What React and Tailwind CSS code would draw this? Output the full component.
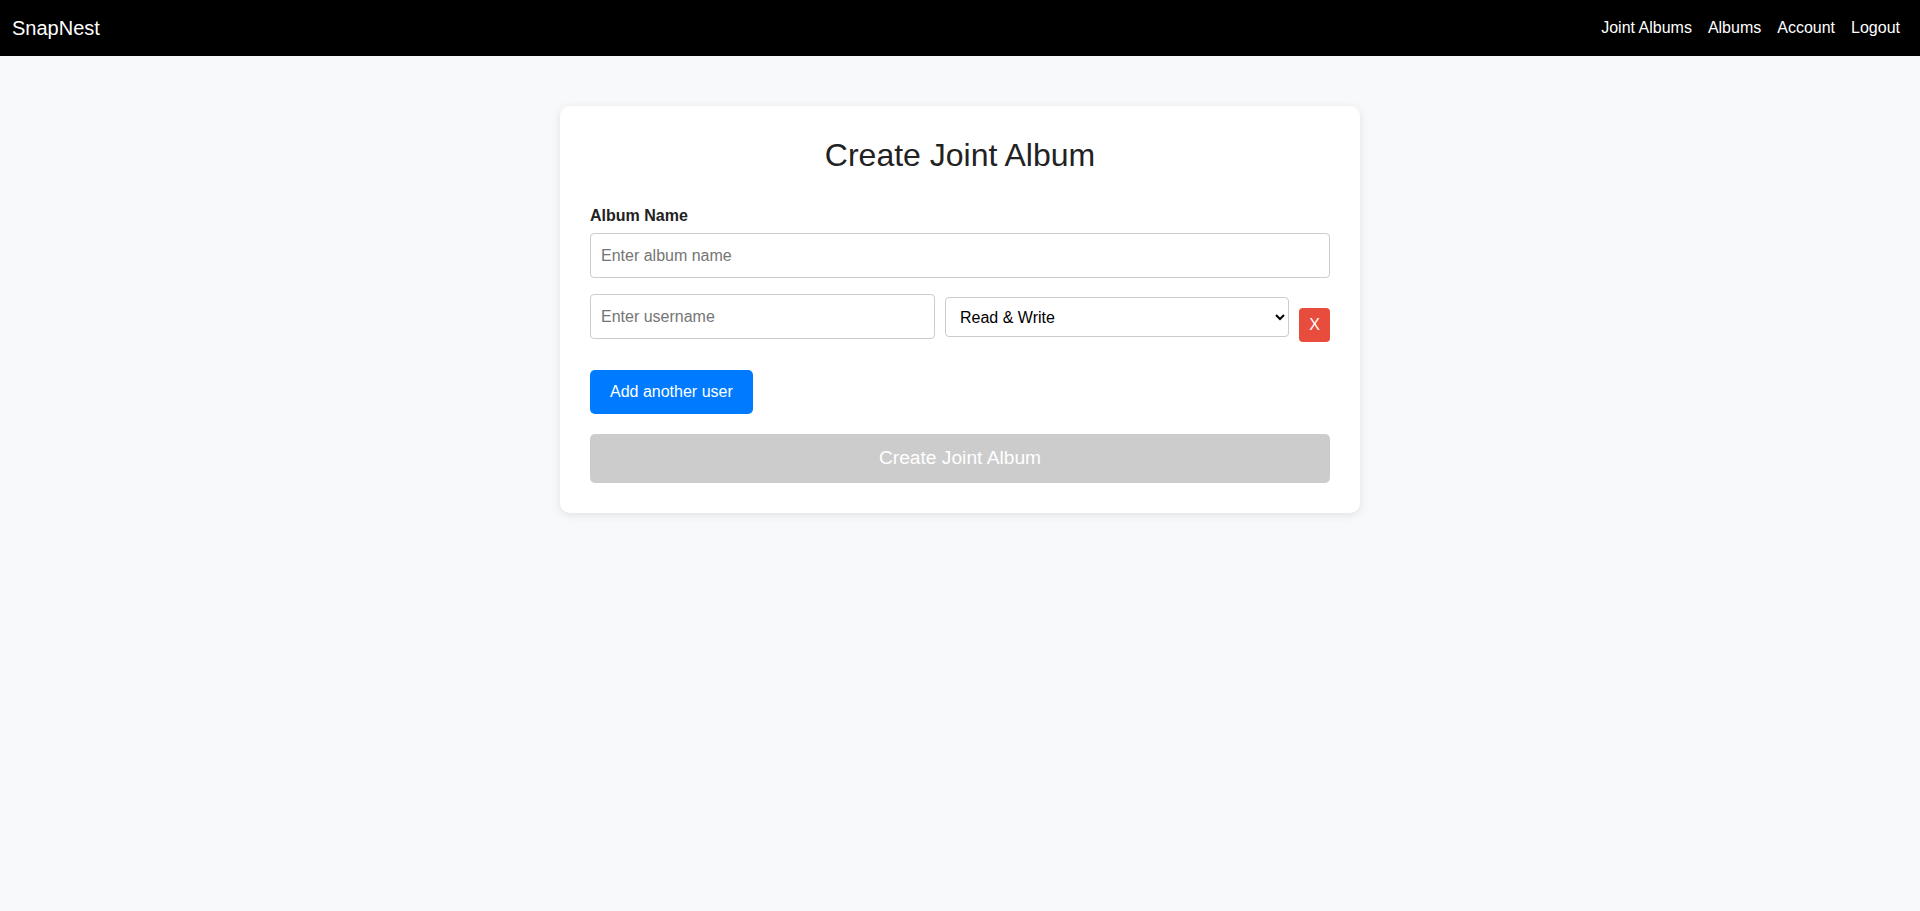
import React, { useState } from 'react';

const font = { fontFamily: '"Liberation Sans", Arial, sans-serif' };

function Navbar() {
  return (
    <nav className="h-[56px] bg-black text-white flex items-center justify-between pl-[12px] pr-[20px]">
      <div className="text-[20px]">SnapNest</div>
      <div className="flex items-center gap-[16px] text-[16px]">
        <a href="#">Joint Albums</a>
        <a href="#">Albums</a>
        <a href="#">Account</a>
        <a href="#">Logout</a>
      </div>
    </nav>
  );
}

export default function App() {
  const [albumName, setAlbumName] = useState('');
  const [users, setUsers] = useState([{ username: '', permission: 'rw' }]);

  const updateUser = (i, key, value) => {
    setUsers(users.map((u, idx) => (idx === i ? { ...u, [key]: value } : u)));
  };

  // button stays disabled until the form has a name
  const canSubmit = albumName.trim() && users.every((u) => u.username.trim());

  return (
    <div className="min-h-screen bg-[#f8f9fa]" style={font}>
      <Navbar />

      <div className="w-[800px] mx-auto mt-[50px] bg-white rounded-[10px] shadow-[0_2px_10px_rgba(0,0,0,0.1)] px-[30px] pt-[31px] pb-[30px]">
        <h2 className="text-[32px] leading-[37px] text-center text-[#222] mb-[33px]">Create Joint Album</h2>

        <label className="block text-[16px] leading-[18px] font-bold text-[#222] mb-[8px]">Album Name</label>
        <input
          type="text"
          value={albumName}
          onChange={(e) => setAlbumName(e.target.value)}
          placeholder="Enter album name"
          className="block w-full h-[45px] px-[10px] text-[16px] border border-[#ccc] rounded-[4px] placeholder:text-[#757575] mb-[16px]"
        />

        {users.map((u, i) => (
          <div key={i} className="flex items-start gap-[10px]">
            <input
              type="text"
              value={u.username}
              onChange={(e) => updateUser(i, 'username', e.target.value)}
              placeholder="Enter username"
              className="w-[345px] shrink-0 h-[45px] px-[10px] text-[16px] border border-[#ccc] rounded-[4px] placeholder:text-[#757575]"
            />
            <select
              value={u.permission}
              onChange={(e) => updateUser(i, 'permission', e.target.value)}
              className="w-[344px] shrink-0 mt-[3px] h-[40px] pl-[10px] pr-[4px] text-[16px] text-black bg-white border border-[#ccc] rounded-[4px]"
            >
              <option value="rw">Read &amp; Write</option>
              <option value="r">Read Only</option>
            </select>
            <button
              onClick={() => setUsers(users.filter((_, idx) => idx !== i))}
              className="mt-[14px] w-[31px] h-[34px] bg-[#e74c3c] text-white text-[16px] rounded-[4px] flex items-center justify-center"
            >
              X
            </button>
          </div>
        ))}

        <button
          onClick={() => setUsers([...users, { username: '', permission: 'rw' }])}
          className="mt-[28px] h-[44px] px-[20px] bg-[#007bff] text-white text-[16px] rounded-[5px]"
        >
          Add another user
        </button>

        <button
          disabled={!canSubmit}
          className="block w-full mt-[20px] h-[49px] bg-[#cccccc] text-white text-[19.2px] rounded-[5px]"
        >
          Create Joint Album
        </button>
      </div>
    </div>
  );
}
